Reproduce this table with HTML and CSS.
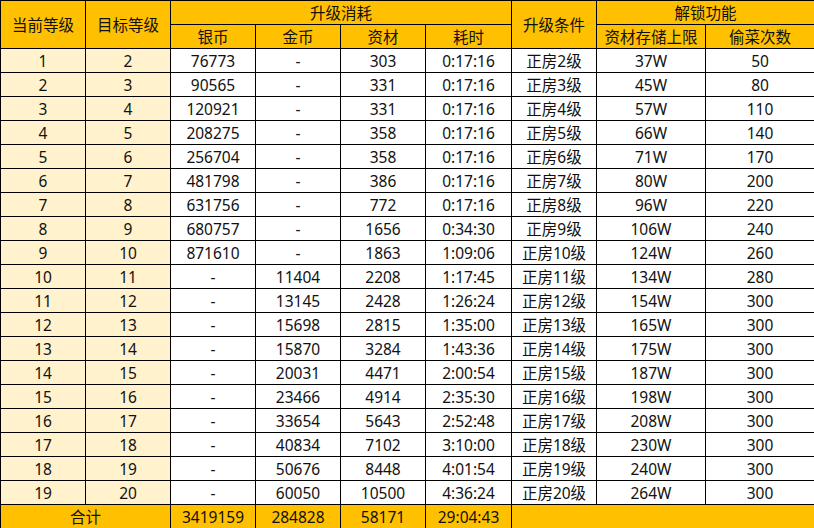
FILE: index.html
```html
<!DOCTYPE html>
<html lang="zh-CN">
<head>
<meta charset="utf-8">
<title>升级消耗表</title>
<link rel="stylesheet" href="styles.css">
</head>
<body>
<table class="sheet">
  <colgroup>
    <col class="c85"><col class="c85"><col class="c85"><col class="c85"><col class="c85"><col class="c86"><col class="c85"><col class="c109"><col class="c109">
  </colgroup>
  <thead>
    <tr>
      <th rowspan="2">当前等级</th>
      <th rowspan="2">目标等级</th>
      <th colspan="4">升级消耗</th>
      <th rowspan="2">升级条件</th>
      <th colspan="2">解锁功能</th>
    </tr>
    <tr>
      <th>银币</th>
      <th>金币</th>
      <th>资材</th>
      <th>耗时</th>
      <th>资材存储上限</th>
      <th>偷菜次数</th>
    </tr>
  </thead>
  <tbody>
    <tr><td class="lv">1</td><td class="lv">2</td><td>76773</td><td>-</td><td>303</td><td>0:17:16</td><td>正房2级</td><td>37W</td><td>50</td></tr>
    <tr><td class="lv">2</td><td class="lv">3</td><td>90565</td><td>-</td><td>331</td><td>0:17:16</td><td>正房3级</td><td>45W</td><td>80</td></tr>
    <tr><td class="lv">3</td><td class="lv">4</td><td>120921</td><td>-</td><td>331</td><td>0:17:16</td><td>正房4级</td><td>57W</td><td>110</td></tr>
    <tr><td class="lv">4</td><td class="lv">5</td><td>208275</td><td>-</td><td>358</td><td>0:17:16</td><td>正房5级</td><td>66W</td><td>140</td></tr>
    <tr><td class="lv">5</td><td class="lv">6</td><td>256704</td><td>-</td><td>358</td><td>0:17:16</td><td>正房6级</td><td>71W</td><td>170</td></tr>
    <tr><td class="lv">6</td><td class="lv">7</td><td>481798</td><td>-</td><td>386</td><td>0:17:16</td><td>正房7级</td><td>80W</td><td>200</td></tr>
    <tr><td class="lv">7</td><td class="lv">8</td><td>631756</td><td>-</td><td>772</td><td>0:17:16</td><td>正房8级</td><td>96W</td><td>220</td></tr>
    <tr><td class="lv">8</td><td class="lv">9</td><td>680757</td><td>-</td><td>1656</td><td>0:34:30</td><td>正房9级</td><td>106W</td><td>240</td></tr>
    <tr><td class="lv">9</td><td class="lv">10</td><td>871610</td><td>-</td><td>1863</td><td>1:09:06</td><td>正房10级</td><td>124W</td><td>260</td></tr>
    <tr><td class="lv">10</td><td class="lv">11</td><td>-</td><td>11404</td><td>2208</td><td>1:17:45</td><td>正房11级</td><td>134W</td><td>280</td></tr>
    <tr><td class="lv">11</td><td class="lv">12</td><td>-</td><td>13145</td><td>2428</td><td>1:26:24</td><td>正房12级</td><td>154W</td><td>300</td></tr>
    <tr><td class="lv">12</td><td class="lv">13</td><td>-</td><td>15698</td><td>2815</td><td>1:35:00</td><td>正房13级</td><td>165W</td><td>300</td></tr>
    <tr><td class="lv">13</td><td class="lv">14</td><td>-</td><td>15870</td><td>3284</td><td>1:43:36</td><td>正房14级</td><td>175W</td><td>300</td></tr>
    <tr><td class="lv">14</td><td class="lv">15</td><td>-</td><td>20031</td><td>4471</td><td>2:00:54</td><td>正房15级</td><td>187W</td><td>300</td></tr>
    <tr><td class="lv">15</td><td class="lv">16</td><td>-</td><td>23466</td><td>4914</td><td>2:35:30</td><td>正房16级</td><td>198W</td><td>300</td></tr>
    <tr><td class="lv">16</td><td class="lv">17</td><td>-</td><td>33654</td><td>5643</td><td>2:52:48</td><td>正房17级</td><td>208W</td><td>300</td></tr>
    <tr><td class="lv">17</td><td class="lv">18</td><td>-</td><td>40834</td><td>7102</td><td>3:10:00</td><td>正房18级</td><td>230W</td><td>300</td></tr>
    <tr><td class="lv">18</td><td class="lv">19</td><td>-</td><td>50676</td><td>8448</td><td>4:01:54</td><td>正房19级</td><td>240W</td><td>300</td></tr>
    <tr><td class="lv">19</td><td class="lv">20</td><td>-</td><td>60050</td><td>10500</td><td>4:36:24</td><td>正房20级</td><td>264W</td><td>300</td></tr>
  </tbody>
  <tfoot>
    <tr><td colspan="2">合计</td><td>3419159</td><td>284828</td><td>58171</td><td>29:04:43</td><td colspan="3"></td></tr>
  </tfoot>
</table>
</body>
</html>
```

FILE: styles.css
```css
html, body {
  margin: 0;
  padding: 0;
  background: #ffffff;
}

.sheet {
  width: 814px;
  table-layout: fixed;
  border-collapse: collapse;
  font-family: "Noto Sans", "Noto Sans CJK SC", sans-serif;
  font-size: 15.5px;
  color: #111111;
}

.c85 { width: 85px; }
.c86 { width: 86px; }
.c109 { width: 109px; }

.sheet th,
.sheet td {
  border: 1px solid #000000;
  height: 23px;
  padding: 0;
  text-align: center;
  vertical-align: middle;
  line-height: 22px;
  white-space: nowrap;
  font-weight: normal;
  background: #ffffff;
}

.sheet th {
  background: #ffc000;
}

.sheet td.lv {
  background: #fff2cc;
}

.sheet tfoot td {
  background: #ffc000;
}
```
